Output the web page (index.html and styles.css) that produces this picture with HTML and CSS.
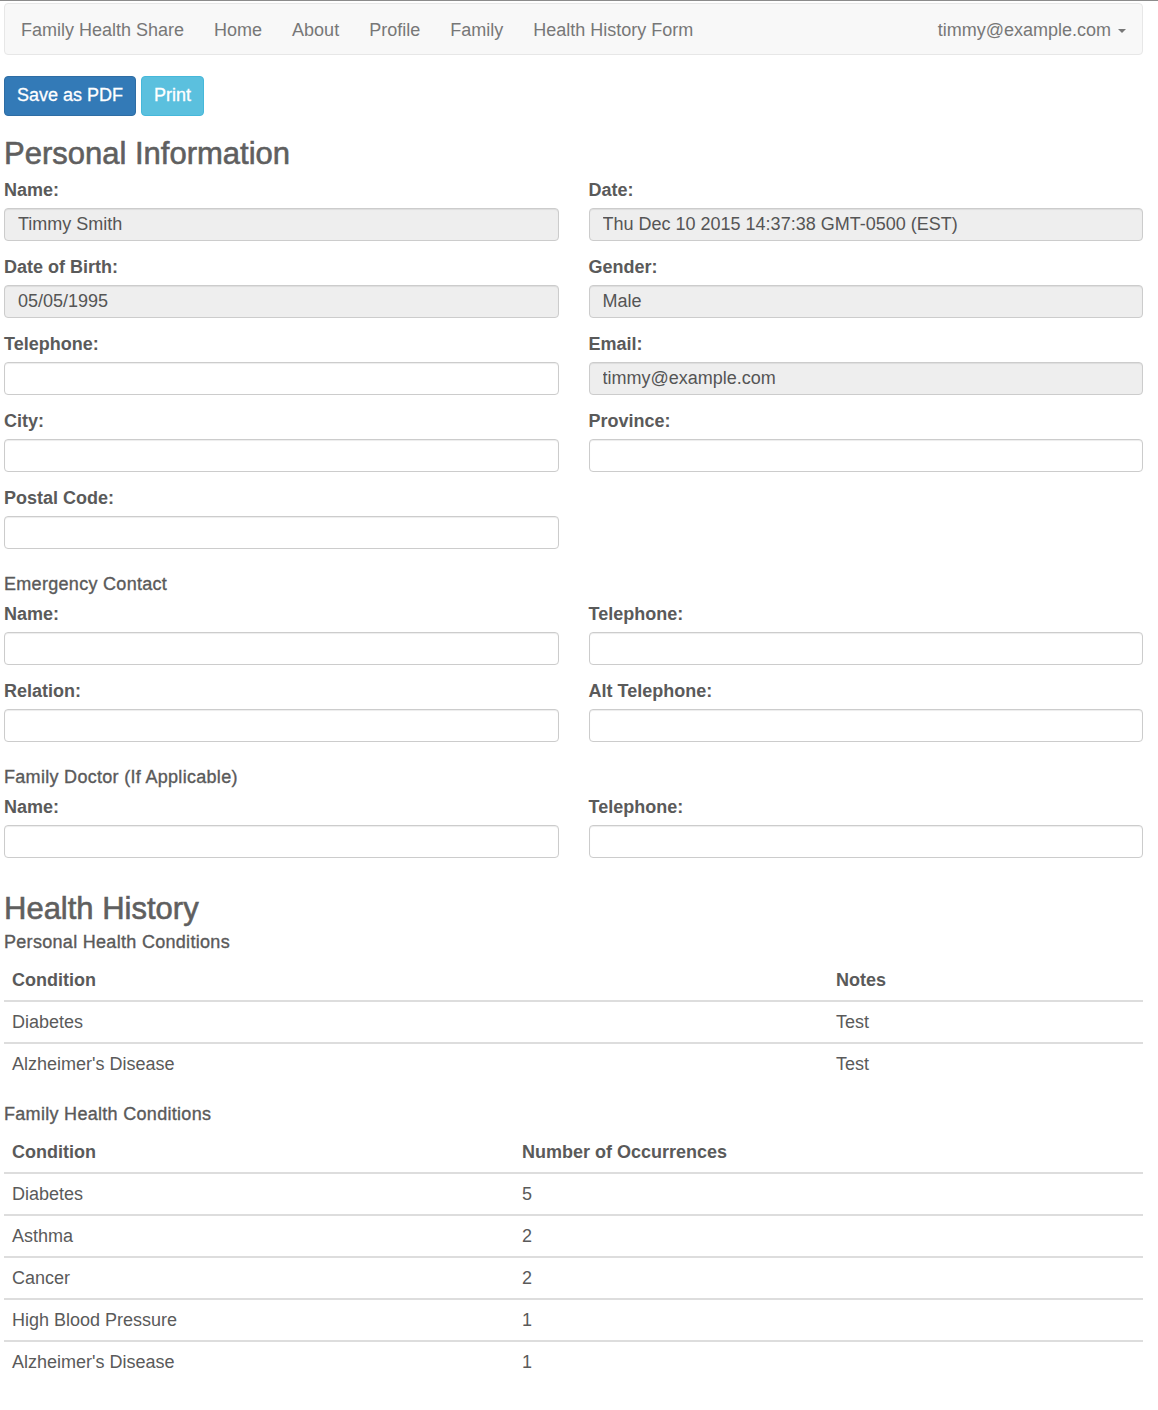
FILE: index.html
```html
<!DOCTYPE html>
<html lang="en">
<head>
<meta charset="utf-8">
<title>Health History Form</title>
<link rel="stylesheet" href="styles.css">
</head>
<body>
<div class="topline"></div>
<div class="page">
  <nav class="navbar">
    <div class="nav-left">
      <a class="brand">Family Health Share</a>
      <a class="nav-link">Home</a>
      <a class="nav-link">About</a>
      <a class="nav-link">Profile</a>
      <a class="nav-link">Family</a>
      <a class="nav-link">Health History Form</a>
    </div>
    <a class="nav-link user">timmy@example.com <span class="caret"></span></a>
  </nav>

  <div class="actions">
    <button class="btn btn-primary">Save as PDF</button>
    <button class="btn btn-info">Print</button>
  </div>

  <h3 class="section-title">Personal Information</h3>
  <div class="grid">
    <div class="group"><label>Name:</label><input class="field readonly" value="Timmy Smith" readonly></div>
    <div class="group"><label>Date:</label><input class="field readonly" value="Thu Dec 10 2015 14:37:38 GMT-0500 (EST)" readonly></div>
    <div class="group"><label>Date of Birth:</label><input class="field readonly" value="05/05/1995" readonly></div>
    <div class="group"><label>Gender:</label><input class="field readonly" value="Male" readonly></div>
    <div class="group"><label>Telephone:</label><input class="field"></div>
    <div class="group"><label>Email:</label><input class="field readonly" value="timmy@example.com" readonly></div>
    <div class="group"><label>City:</label><input class="field"></div>
    <div class="group"><label>Province:</label><input class="field"></div>
    <div class="group"><label>Postal Code:</label><input class="field"></div>
  </div>

  <h5 class="subhead">Emergency Contact</h5>
  <div class="grid">
    <div class="group"><label>Name:</label><input class="field"></div>
    <div class="group"><label>Telephone:</label><input class="field"></div>
    <div class="group"><label>Relation:</label><input class="field"></div>
    <div class="group"><label>Alt Telephone:</label><input class="field"></div>
  </div>

  <h5 class="subhead">Family Doctor (If Applicable)</h5>
  <div class="grid">
    <div class="group"><label>Name:</label><input class="field"></div>
    <div class="group"><label>Telephone:</label><input class="field"></div>
  </div>

  <h3 class="section-title second">Health History</h3>
  <h5 class="subhead tight">Personal Health Conditions</h5>
  <table class="table">
    <thead><tr><th class="col-personal">Condition</th><th>Notes</th></tr></thead>
    <tbody>
      <tr><td>Diabetes</td><td>Test</td></tr>
      <tr><td>Alzheimer's Disease</td><td>Test</td></tr>
    </tbody>
  </table>

  <h5 class="subhead tight after-table">Family Health Conditions</h5>
  <table class="table">
    <thead><tr><th class="col-family">Condition</th><th>Number of Occurrences</th></tr></thead>
    <tbody>
      <tr><td>Diabetes</td><td>5</td></tr>
      <tr><td>Asthma</td><td>2</td></tr>
      <tr><td>Cancer</td><td>2</td></tr>
      <tr><td>High Blood Pressure</td><td>1</td></tr>
      <tr><td>Alzheimer's Disease</td><td>1</td></tr>
    </tbody>
  </table>
</div>
</body>
</html>
```

FILE: styles.css
```css
* { box-sizing: border-box; }

html, body {
  margin: 0;
  padding: 0;
  background: #fff;
}

body {
  font-family: "Liberation Sans", Arial, sans-serif;
  font-size: 18px;
  line-height: 1.42857;
  color: #5a5a5a;
}

.topline {
  height: 1px;
  background: #8c8c8c;
}

.page {
  padding: 2px 15px 40px 4px;
}

.navbar {
  display: flex;
  justify-content: space-between;
  align-items: center;
  height: 52px;
  background: #f8f8f8;
  border: 1px solid #e7e7e7;
  border-radius: 4px;
  padding: 1px 1px 0 1px;
}

.nav-left {
  display: flex;
  align-items: center;
}

.brand, .nav-link {
  display: block;
  padding: 0 15px;
  color: #777;
  font-size: 18px;
  line-height: 50px;
  text-decoration: none;
}

.caret {
  display: inline-block;
  width: 0;
  height: 0;
  margin-left: 2px;
  vertical-align: middle;
  border-top: 4px solid #777;
  border-left: 4px solid transparent;
  border-right: 4px solid transparent;
}

.actions {
  display: flex;
  gap: 5px;
  margin-top: 21px;
}

.btn {
  font-family: inherit;
  font-size: 18px;
  line-height: 25.7px;
  padding: 6px 12px;
  border-radius: 4px;
  border: 1px solid transparent;
  color: #fff;
  height: 40px;
  -webkit-text-stroke: 0.3px #fff;
}

.btn-primary {
  background: #337ab7;
  border-color: #2e6da4;
}

.btn-info {
  background: #5bc0de;
  border-color: #46b8da;
}

.section-title {
  font-size: 31px;
  font-weight: 500;
  line-height: 34px;
  margin: 21px 0 9px;
  color: #5f5f5f;
  -webkit-text-stroke: 0.6px #5f5f5f;
}

.section-title.second {
  margin-top: 18px;
  margin-bottom: 6px;
}

.grid {
  display: grid;
  grid-template-columns: 1fr 1fr;
  column-gap: 30px;
}

.group {
  margin-bottom: 16px;
}

.group label {
  display: block;
  font-weight: bold;
  line-height: 20px;
  margin-bottom: 8px;
}

.field {
  display: block;
  width: 100%;
  height: 33px;
  padding: 0 13px;
  font-family: inherit;
  font-size: 18px;
  color: #555;
  background: #fff;
  border: 1px solid #ccc;
  border-radius: 4px;
  box-shadow: inset 0 1px 1px rgba(0, 0, 0, 0.075);
  outline: none;
}

.field.readonly {
  background: #eee;
}

.subhead {
  font-size: 18px;
  font-weight: 500;
  line-height: 20px;
  letter-spacing: 0.3px;
  margin: 9px 0 10px;
  -webkit-text-stroke: 0.35px #5a5a5a;
}

.subhead.tight {
  margin: 0 0 8px;
}

.subhead.after-table {
  margin-top: 20px;
}

.table {
  width: 100%;
  border-collapse: collapse;
  border-spacing: 0;
}

.table th, .table td {
  text-align: left;
  padding: 8px 8px;
  line-height: 24px;
  vertical-align: top;
}

.table th {
  font-weight: bold;
  border-bottom: 2px solid #ddd;
}

.table tbody tr + tr td {
  border-top: 2px solid #ddd;
}

.col-personal { width: 824px; }
.col-family { width: 510px; }
```
